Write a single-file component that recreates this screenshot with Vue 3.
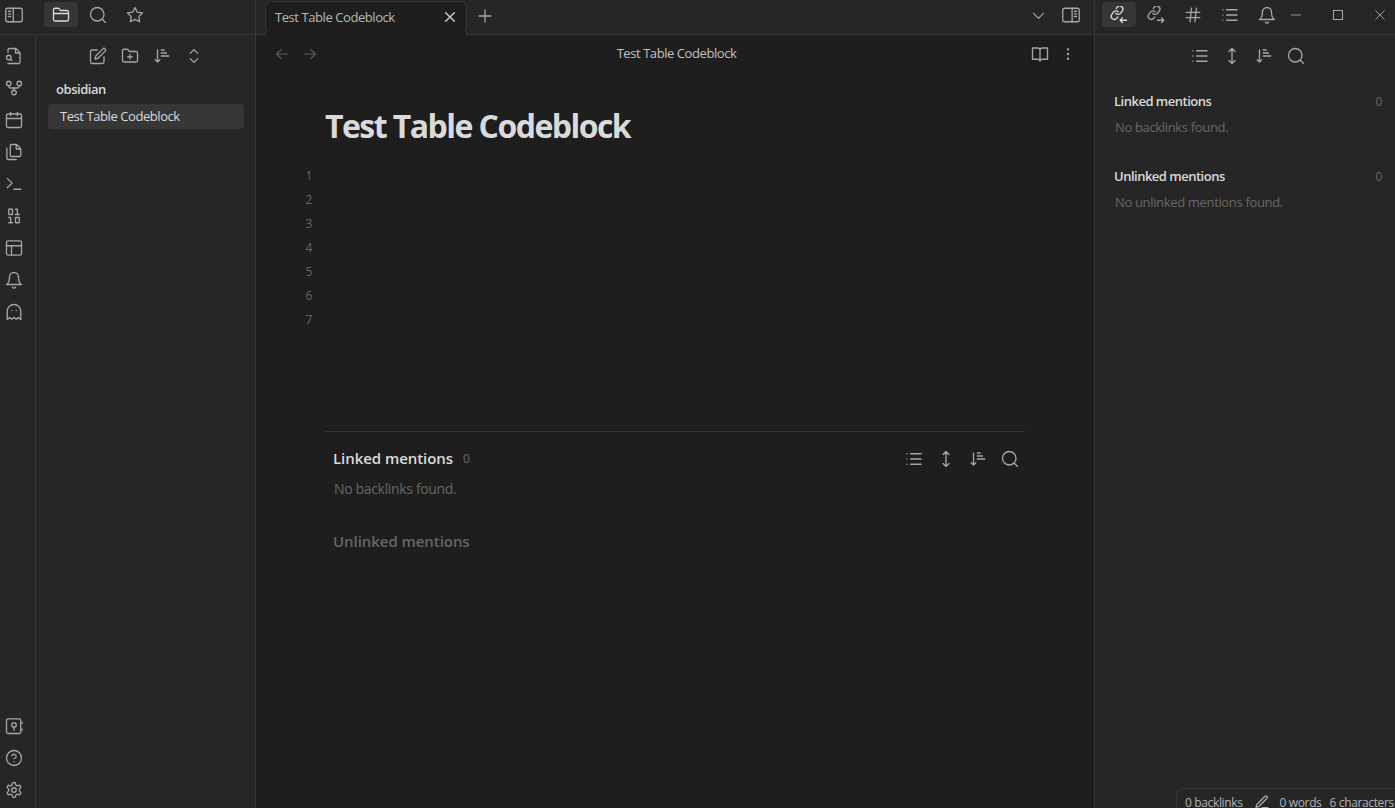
<script setup>
import { h } from 'vue'

const linkPaths = '<g transform="translate(9.4 8.9) rotate(-8) scale(.84) translate(-12 -12)" stroke-width="2.1"><path d="M10 13a5 5 0 0 0 7.54.54l3-3a5 5 0 0 0-7.07-7.07l-1.72 1.71"/><path d="M14 11a5 5 0 0 0-7.54-.54l-3 3a5 5 0 0 0 7.07 7.07l1.71-1.71"/></g>'
const folderShape = '<path d="M4 20h16a2 2 0 0 0 2-2V8a2 2 0 0 0-2-2h-7.93a2 2 0 0 1-1.66-.9l-.82-1.2A2 2 0 0 0 7.93 3H4a2 2 0 0 0-2 2v13c0 1.1.9 2 2 2Z"/>'

const icons = {
  sidebarLeft: '<rect x="1" y="3" width="22" height="18" rx="2.5"/><path d="M11 3v18M4.5 7h3M4.5 10.5h3M4.5 14h3"/>',
  sidebarRight: '<rect x="1" y="3" width="22" height="18" rx="2.5"/><path d="M13.5 3v18M16.5 7h3M16.5 10.5h3M16.5 14h3"/>',
  folder: folderShape + '<path d="M2 10h20"/>',
  folderPlus: folderShape + '<path d="M12 10v6M9 13h6"/>',
  search: '<circle cx="11" cy="11" r="9"/><path d="m22 22-4.3-4.3"/>',
  star: '<path d="m12 2 3.09 6.26L22 9.27l-5 4.87 1.18 6.88L12 17.77l-6.18 3.25L7 14.14 2 9.27l6.91-1.01L12 2z"/>',
  fileSearch: '<path d="M4 22h14a2 2 0 0 0 2-2V7.5L14.5 2H6a2 2 0 0 0-2 2v3M14 2v6h6M9 18l-1.5-1.5"/><circle cx="5" cy="14" r="3"/>',
  fork: '<circle cx="12" cy="18" r="3"/><circle cx="5" cy="6" r="3"/><circle cx="19" cy="6" r="3"/><path d="M19 9v1a2 2 0 0 1-2 2H7a2 2 0 0 1-2-2V9M12 12v3"/>',
  calendar: '<rect x="2" y="4" width="20" height="18" rx="2"/><path d="M16.5 2v4M7.5 2v4M2 10h20"/>',
  files: '<path d="M15.5 2H8.6A1.6 1.6 0 0 0 7 3.6v12.8A1.6 1.6 0 0 0 8.6 18h10.8a1.6 1.6 0 0 0 1.6-1.6V7.5L15.5 2zM2.5 7v13.4A1.6 1.6 0 0 0 4.1 22H15M15 2v6h6"/>',
  terminal: '<path d="m3 17 6.5-6.2L3 4.5M12 19h9"/>',
  binary: '<path d="M5 21h5M14 10h5M5 14h2.5v7M14 3h2.5v7"/><rect x="5" y="3" width="5" height="7" rx=".5"/><rect x="14" y="14" width="5" height="7" rx=".5"/>',
  layout: '<rect x="2" y="2.5" width="20" height="19" rx="2"/><path d="M2 9h20M8.7 21V9"/>',
  bell: '<path d="M6 8a6 6 0 0 1 12 0c0 8 4 10 4 10H2s4-2 4-10M10 21.5a2.2 2.2 0 0 0 4 0"/>',
  ghost: '<path d="M9 10h.01M15 10h.01M12 2a9 9 0 0 0-9 8.5V22l3.2-2.5L9 21.5l3-2.3 3 2.3 2.8-2L21 22V10.5A9 9 0 0 0 12 2z"/>',
  vault: '<rect x="2" y="2.5" width="19" height="19.5" rx="2"/><circle cx="12" cy="10.5" r="3"/><path d="M12 13.5v4M22.7 7v1.5M22.7 16v1.5"/>',
  help: '<circle cx="12" cy="12" r="10"/><path d="M9.09 9a3 3 0 0 1 5.83 1c0 2-3 3-3 3M12 17h.01"/>',
  settings: '<path d="M12.22 2h-.44a2 2 0 0 0-2 2v.18a2 2 0 0 1-1 1.73l-.43.25a2 2 0 0 1-2 0l-.15-.08a2 2 0 0 0-2.73.73l-.22.38a2 2 0 0 0 .73 2.73l.15.1a2 2 0 0 1 1 1.72v.51a2 2 0 0 1-1 1.74l-.15.09a2 2 0 0 0-.73 2.73l.22.38a2 2 0 0 0 2.73.73l.15-.08a2 2 0 0 1 2 0l.43.25a2 2 0 0 1 1 1.73V20a2 2 0 0 0 2 2h.44a2 2 0 0 0 2-2v-.18a2 2 0 0 1 1-1.73l.43-.25a2 2 0 0 1 2 0l.15.08a2 2 0 0 0 2.73-.73l.22-.39a2 2 0 0 0-.73-2.73l-.15-.08a2 2 0 0 1-1-1.74v-.5a2 2 0 0 1 1-1.74l.15-.09a2 2 0 0 0 .73-2.73l-.22-.38a2 2 0 0 0-2.73-.73l-.15.08a2 2 0 0 1-2 0l-.43-.25a2 2 0 0 1-1-1.73V4a2 2 0 0 0-2-2z"/><circle cx="12" cy="12" r="3"/>',
  edit: '<path d="M11 4H4a2 2 0 0 0-2 2v14a2 2 0 0 0 2 2h14a2 2 0 0 0 2-2v-7M18.5 2.5a2.12 2.12 0 0 1 3 3L12 15l-4 1 1-4 9.5-9.5z"/>',
  sort: '<path d="M11 4h4M11 8h7M11 12h10M3 17l3 3 3-3M6 19V4"/>',
  updown: '<path d="m7 15.5 5 5 5-5M7 8.5l5-5 5 5"/>',
  close: '<path d="M18.5 5.5l-13 13M5.5 5.5l13 13"/>',
  plus: '<path d="M12 4v16M4 12h16"/>',
  chevron: '<path d="m5 9 7 7 7-7"/>',
  linkIn: linkPaths + '<path d="M22 19h-8.5M16.5 16l-3 3 3 3"/>',
  linkOut: linkPaths + '<path d="M14 19H22.5M19.5 16l3 3-3 3"/>',
  hash: '<path d="M3 8.5h18M3 15.5h18M10 3 8 21M16.5 3l-2 18"/>',
  list: '<path d="M7.5 5H21.5M7.5 12H21.5M7.5 19H21.5M2.5 5h.01M2.5 12h.01M2.5 19h.01"/>',
  vertical: '<path d="m8 18 4 4 4-4M8 6l4-4 4 4M12 2v20"/>',
  back: '<path d="M20 12H4M11 5l-7 7 7 7"/>',
  forward: '<path d="M4 12h16M13 5l7 7-7 7"/>',
  book: '<path d="M2 4h7a3 3 0 0 1 3 3v14.5a3 3 0 0 0-3-2.5H2zM22 4h-7a3 3 0 0 0-3 3v14.5a3 3 0 0 1 3-2.5h7z"/>',
  dots: '<g fill="currentColor"><circle cx="12" cy="5" r="1"/><circle cx="12" cy="12" r="1"/><circle cx="12" cy="19" r="1"/></g>',
  pencil: '<path d="M12 20.5h9M16.5 3.5a2.12 2.12 0 0 1 3 3L7 19l-4 1 1-4Z"/>',
  minimize: '<path d="M6 12h12"/>',
  maximize: '<rect x="6" y="6" width="12" height="12"/>',
}

function Icon({ name, size = 18, weight = 1.75 }) {
  return h('svg', {
    width: size, height: size, viewBox: '0 0 24 24', fill: 'none', stroke: 'currentColor',
    'stroke-width': weight, 'stroke-linecap': 'round', 'stroke-linejoin': 'round', innerHTML: icons[name],
  })
}
Icon.props = ['name', 'size', 'weight']

const title = 'Test Table Codeblock'
const ribbonTop = ['fileSearch', 'fork', 'calendar', 'files', 'terminal', 'binary', 'layout', 'bell', 'ghost']
const ribbonBottom = ['vault', 'help', 'settings']
const backlinkTools = ['list', 'vertical', 'sort', 'search']
const sections = [
  { name: 'Linked mentions', empty: 'No backlinks found.' },
  { name: 'Unlinked mentions', empty: 'No unlinked mentions found.' },
]
</script>

<template>
  <div class="app">
    <aside class="left">
      <header class="bar left-bar">
        <span class="toggle"><Icon name="sidebarLeft" /></span>
        <span class="tab-icon on"><Icon name="folder" /></span>
        <span class="tab-icon"><Icon name="search" /></span>
        <span class="tab-icon"><Icon name="star" /></span>
      </header>
      <div class="left-body">
        <nav class="ribbon">
          <span v-for="n in ribbonTop" :key="n" class="slot"><Icon :name="n" /></span>
          <i class="grow"></i>
          <span v-for="n in ribbonBottom" :key="n" class="slot"><Icon :name="n" /></span>
        </nav>
        <div class="explorer">
          <div class="tools">
            <span v-for="n in ['edit', 'folderPlus', 'sort', 'updown']" :key="n" class="slot"><Icon :name="n" /></span>
          </div>
          <div class="vault">obsidian</div>
          <div class="file title">{{ title }}</div>
        </div>
      </div>
    </aside>

    <main class="center">
      <header class="bar tabs">
        <div class="tab">
          <span class="title">{{ title }}</span>
          <Icon name="close" :size="16" :weight="2" />
        </div>
        <Icon class="new-tab" name="plus" />
        <i class="grow"></i>
        <Icon class="tab-menu" name="chevron" :size="17" />
        <Icon class="right-toggle" name="sidebarRight" />
      </header>
      <div class="view-head">
        <div class="history"><Icon name="back" :size="16" /><Icon name="forward" :size="16" /></div>
        <div class="view-title title">{{ title }}</div>
        <div class="view-actions"><Icon name="book" /><Icon name="dots" :size="16" :weight="1.6" /></div>
      </div>
      <article class="note">
        <h1>{{ title }}</h1>
        <div class="lines"><div v-for="n in 7" :key="n">{{ n }}</div></div>
        <section class="mentions">
          <div class="mention-head">
            <b>Linked mentions</b><span class="count">0</span>
            <i class="grow"></i>
            <span v-for="n in backlinkTools" :key="n" class="slot"><Icon :name="n" /></span>
          </div>
          <p>No backlinks found.</p>
          <b class="muted">Unlinked mentions</b>
        </section>
      </article>
    </main>

    <aside class="right">
      <header class="bar right-bar">
        <span class="tab-icon on"><Icon name="linkIn" /></span>
        <span v-for="n in ['linkOut', 'hash', 'list', 'bell']" :key="n" class="tab-icon"><Icon :name="n" /></span>
        <div class="window">
          <Icon name="minimize" :weight="1.2" /><Icon name="maximize" :weight="1.4" /><Icon name="close" :size="16" :weight="1.3" />
        </div>
      </header>
      <div class="tools right-tools">
        <span v-for="n in backlinkTools" :key="n" class="slot"><Icon :name="n" /></span>
      </div>
      <section v-for="s in sections" :key="s.name" class="backlinks">
        <div class="backlinks-head"><b>{{ s.name }}</b><span class="count">0</span></div>
        <p>{{ s.empty }}</p>
      </section>
    </aside>

    <footer class="status">
      <span>0 backlinks</span><Icon name="pencil" :size="16" :weight="2" /><span class="words">0 words</span><span>6 characters</span>
    </footer>
  </div>
</template>

<style>
body { background: #1e1e1e; overflow: hidden; }
</style>

<style scoped>
* { box-sizing: border-box; }
.app {
  position: relative;
  display: grid;
  grid-template-columns: 256px 838px 301px;
  width: 1395px;
  height: 808px;
  overflow: hidden;
  background: #262626;
  color: #dadada;
  font: 13px/18px "Open Sans", "Noto Sans", sans-serif;
  letter-spacing: -0.34px;
  white-space: nowrap;
}
svg { display: block; flex: none; color: #a6a6a6; }
.title { letter-spacing: -0.43px; }
.count { font-size: 12px; }
.grow { flex: 1; }
.bar { display: flex; height: 35px; border-bottom: 1px solid #363636; }
.slot { display: flex; align-items: center; justify-content: center; width: 32px; height: 32px; }
.tab-icon { display: flex; align-items: center; justify-content: center; width: 34px; height: 25px; margin: 2px 3px 0 0; border-radius: 4px; }
.on { background: #363636; }
.on svg { color: #dadada; }

.left { display: flex; flex-direction: column; border-right: 1px solid #363636; }
.toggle { width: 39px; margin: 6px 0 0 5px; }
.left-body { display: flex; flex: 1; }
.ribbon { display: flex; flex-direction: column; width: 36px; padding: 5px 0 2px; border-right: 1px solid #363636; }
.ribbon .slot { margin-left: -2px; }
.explorer { flex: 1; padding: 5px 11px 0 12px; }
.tools { display: flex; justify-content: center; }
.vault { margin: 8px 0 5px 8px; font-weight: 600; line-height: 19px; letter-spacing: -0.45px; }
.file { height: 25px; padding-left: 12px; border-radius: 4px; background: #363636; line-height: 25px; }

.center { display: flex; flex-direction: column; min-width: 0; background: #1e1e1e; }
.tabs { background: #262626; }
.tab {
  position: relative;
  display: flex;
  justify-content: space-between;
  width: 202px;
  height: 34px;
  margin: 1px 0 -1px 9px;
  padding: 6px 9px 0 9px;
  border: 1px solid #363636;
  border-bottom: 0;
  border-radius: 7px 7px 0 0;
  background: #1e1e1e;
  color: #b9b9b9;
}
.tab::before, .tab::after {
  position: absolute;
  bottom: 0;
  width: 5px;
  height: 5px;
  border-bottom: 1px solid #363636;
  background: #262626;
  content: "";
}
.tab::before { left: -5px; border-right: 1px solid #363636; border-bottom-right-radius: 5px; }
.tab::after { right: -5px; border-left: 1px solid #363636; border-bottom-left-radius: 5px; }
.tab svg { margin: 1px -1px 0 0; color: #cfcfcf; }
.new-tab { margin: 7px 0 0 9px; }
.tab-menu { margin: 7px 6px 0 0; }
.right-toggle { margin: 6px 14px 0 9px; }
.view-head { display: grid; grid-template-columns: 1fr auto 1fr; align-items: center; height: 38px; padding: 0 18px; }
.history { display: flex; gap: 12px; }
.history svg { color: #5c5c5c; }
.view-title { margin: -2px -3px 0 0; color: #c2c2c2; }
.view-actions { display: flex; align-items: center; justify-content: flex-end; gap: 11px; }
.note { width: 700px; margin: 30px 0 0 69px; }
h1 { margin: 0; font-size: 32px; line-height: 45px; font-weight: 700; letter-spacing: -1.55px; }
.lines { width: 26px; height: 243px; margin: 16px 0 24px -39px; color: #666; font-size: 12px; line-height: 24px; text-align: right; }
.mentions { padding: 11px 0 0 8px; border-top: 1px solid #363636; }
.mention-head { display: flex; align-items: center; margin-right: -1px; }
.mention-head b, .muted { font-size: 15px; font-weight: 600; letter-spacing: -0.06px; }
.mention-head b { margin-top: -2px; }
.mention-head .count { margin-left: 10px; color: #666; }
.mentions p { margin: 5px 0 34px 1px; color: #666; font-size: 14px; }
.muted { color: #666; }

.right { border-left: 1px solid #363636; }
.right-bar { padding-left: 7px; }
.right-bar > .tab-icon { flex: none; }
.window { display: flex; gap: 24px; margin: 6px 0 0; }
.window svg:last-child { margin: 1px 0 0 1px; }
.right-tools { padding: 5px 0 0 5px; }
.backlinks { height: 75px; padding: 20px 13px 0 19px; }
.backlinks-head { display: flex; justify-content: space-between; color: #666; }
.backlinks-head b { color: #dadada; font-weight: 600; letter-spacing: -0.5px; }
.backlinks-head .count { line-height: 19px; height: 18px; }
.backlinks p { margin: 8px 0 0 1px; color: #666; }

.status {
  position: absolute;
  right: 0;
  bottom: 0;
  display: flex;
  width: 219px;
  height: 20px;
  padding: 8px 0 0 8px;
  border: solid #363636;
  border-width: 1px 0 0 1px;
  border-radius: 8px 0 0 0;
  background: #262626;
  color: #b3b3b3;
  font-size: 12px;
  line-height: 11px;
  letter-spacing: -0.36px;
}
.status svg { margin: -3px 10px 0 11px; }
.words { margin-right: 8px; }
</style>
